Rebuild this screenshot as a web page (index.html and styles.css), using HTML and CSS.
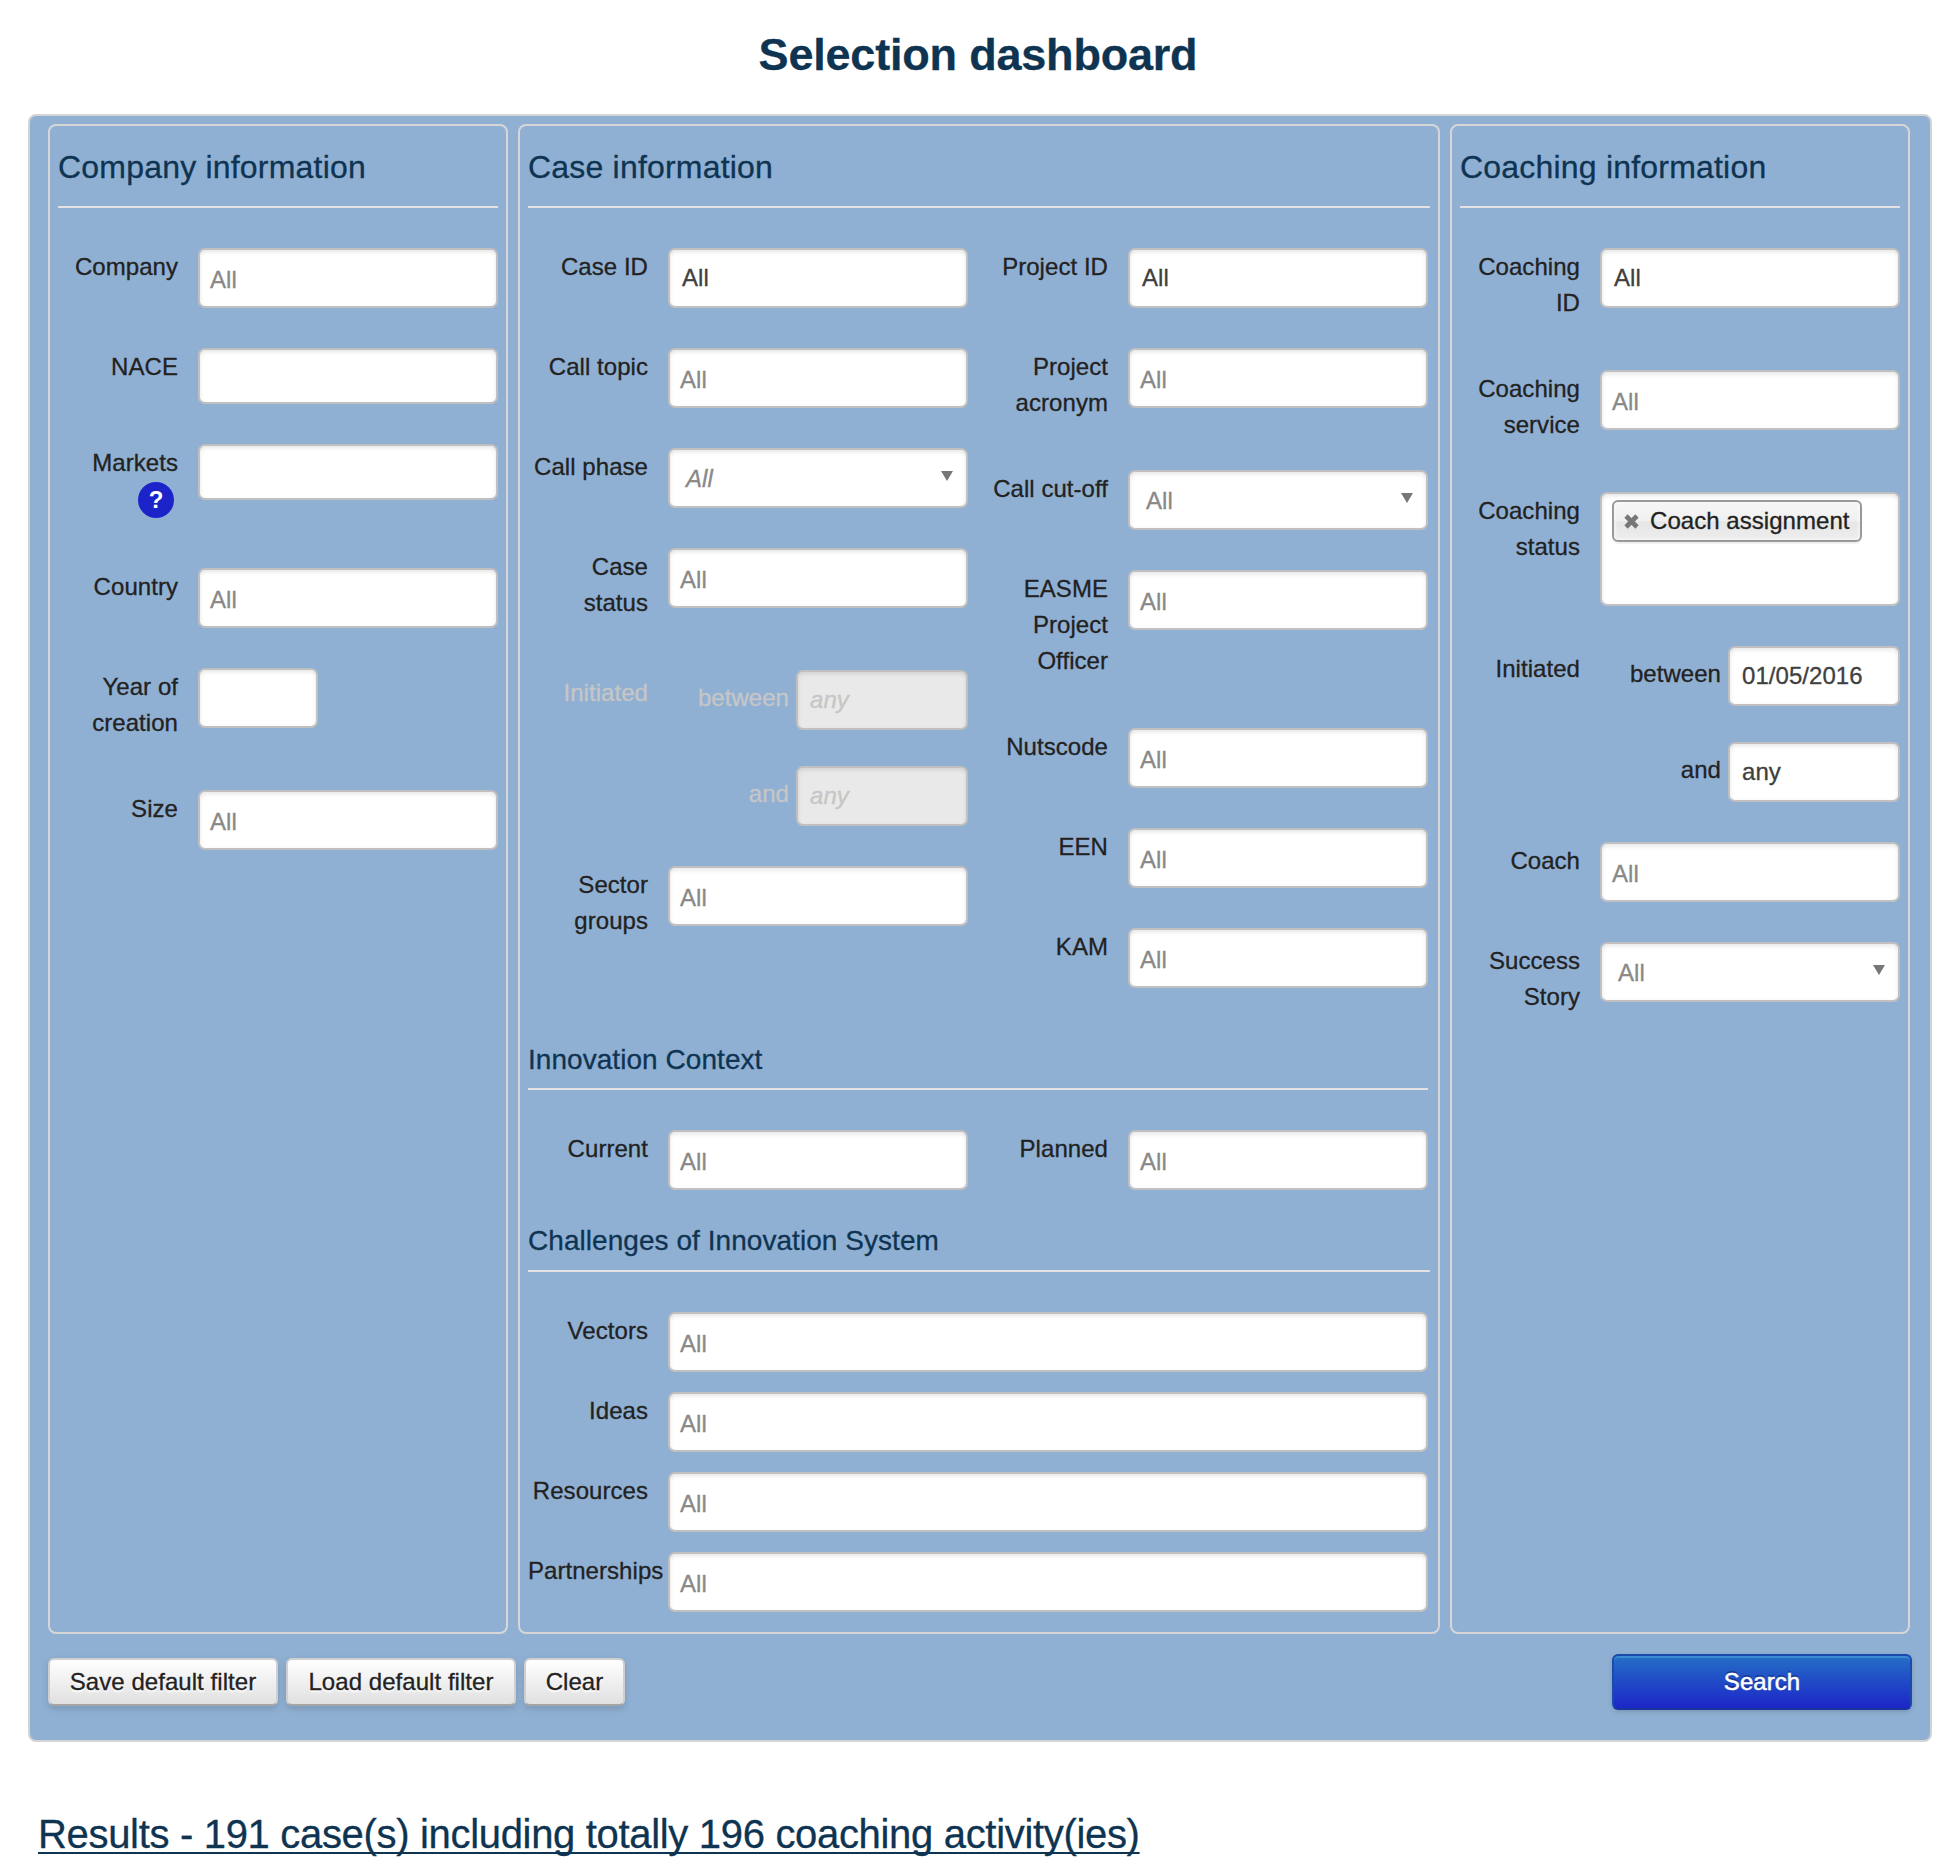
FILE: index.html
```html
<!DOCTYPE html>
<html lang="en">
<head>
<meta charset="utf-8">
<title>Selection dashboard</title>
<link rel="stylesheet" href="styles.css">
</head>
<body>
<h1 class="page-title">Selection dashboard</h1>
<main class="panel">
  <div class="columns">
    <section class="column">
      <h2 class="column-title">Company information</h2>
      <div class="rows">
        <div class="row"><div class="label">Company</div><div class="field multi">All</div></div>
        <div class="row"><div class="label">NACE</div><div class="field short"></div></div>
        <div class="row markets"><div class="label">Markets<span class="help">?</span></div><div class="field short"></div></div>
        <div class="row"><div class="label">Country</div><div class="field multi">All</div></div>
        <div class="row"><div class="label">Year of creation</div><div class="field year"></div></div>
        <div class="row"><div class="label">Size</div><div class="field multi">All</div></div>
      </div>
    </section>
    <section class="column">
      <h2 class="column-title">Case information</h2>
      <div class="pair case-pair">
        <div class="rows">
          <div class="row"><div class="label">Case ID</div><div class="field text">All</div></div>
          <div class="row"><div class="label">Call topic</div><div class="field multi">All</div></div>
          <div class="row"><div class="label">Call phase</div><div class="field select italic">All<svg class="arrow" viewBox="0 0 12 10"><path d="M0 0h12L6 10z"/></svg></div></div>
          <div class="row"><div class="label">Case status</div><div class="field multi">All</div></div>
          <div class="row disabled"><div class="label lowered">Initiated</div>
            <div class="dates">
              <div class="date"><span>between</span><div class="field text italic">any</div></div>
              <div class="date"><span>and</span><div class="field text italic">any</div></div>
            </div>
          </div>
          <div class="row"><div class="label">Sector groups</div><div class="field multi">All</div></div>
        </div>
        <div class="rows">
          <div class="row"><div class="label">Project ID</div><div class="field text">All</div></div>
          <div class="row"><div class="label">Project acronym</div><div class="field multi">All</div></div>
          <div class="row"><div class="label">Call cut-off</div><div class="field select">All<svg class="arrow" viewBox="0 0 12 10"><path d="M0 0h12L6 10z"/></svg></div></div>
          <div class="row"><div class="label">EASME Project Officer</div><div class="field multi">All</div></div>
          <div class="row"><div class="label">Nutscode</div><div class="field multi">All</div></div>
          <div class="row"><div class="label">EEN</div><div class="field multi">All</div></div>
          <div class="row"><div class="label">KAM</div><div class="field multi">All</div></div>
        </div>
      </div>
      <h3 class="sub-title context">Innovation Context</h3>
      <div class="pair">
        <div class="rows"><div class="row"><div class="label">Current</div><div class="field multi">All</div></div></div>
        <div class="rows"><div class="row"><div class="label">Planned</div><div class="field multi">All</div></div></div>
      </div>
      <h3 class="sub-title challenges">Challenges of Innovation System</h3>
      <div class="rows wide">
        <div class="row"><div class="label">Vectors</div><div class="field multi">All</div></div>
        <div class="row"><div class="label">Ideas</div><div class="field multi">All</div></div>
        <div class="row"><div class="label">Resources</div><div class="field multi">All</div></div>
        <div class="row"><div class="label">Partnerships</div><div class="field multi">All</div></div>
      </div>
    </section>
    <section class="column">
      <h2 class="column-title">Coaching information</h2>
      <div class="rows">
        <div class="row"><div class="label">Coaching ID</div><div class="field text">All</div></div>
        <div class="row"><div class="label">Coaching service</div><div class="field multi">All</div></div>
        <div class="row"><div class="label">Coaching status</div><div class="field tags"><div class="tag"><svg class="cross" viewBox="0 0 15 15"><path d="M2 2l11 11M13 2L2 13"/></svg>Coach assignment</div></div></div>
        <div class="row"><div class="label lowered">Initiated</div>
          <div class="dates">
            <div class="date"><span>between</span><div class="field text">01/05/2016</div></div>
            <div class="date"><span>and</span><div class="field text">any</div></div>
          </div>
        </div>
        <div class="row"><div class="label">Coach</div><div class="field multi">All</div></div>
        <div class="row"><div class="label">Success Story</div><div class="field select">All<svg class="arrow" viewBox="0 0 12 10"><path d="M0 0h12L6 10z"/></svg></div></div>
      </div>
    </section>
  </div>
  <div class="actions">
    <button class="btn save">Save default filter</button>
    <button class="btn load">Load default filter</button>
    <button class="btn clear">Clear</button>
    <button class="btn search">Search</button>
  </div>
</main>
<h2 class="results">Results - 191 case(s) including totally 196 coaching activity(ies)</h2>
</body>
</html>
```
FILE: styles.css
```css
* { box-sizing: border-box; }

body {
  margin: 0;
  height: 1868px;
  overflow: hidden;
  background: #fff;
  color: #222;
  font: 24px/36px "Helvetica Neue", "Liberation Sans", Arial, sans-serif;
  letter-spacing: 0.05px;
  -webkit-text-stroke: 0.3px;
}

h1, h2, h3 { margin: 0; color: #0e3452; font-weight: normal; }

.page-title {
  height: 114px;
  padding: 30px 4px 0 0;
  font-size: 45px;
  line-height: 50px;
  font-weight: bold;
  letter-spacing: -0.2px;
  text-align: center;
}

.panel {
  height: 1628px;
  margin: 0 28px;
  padding: 8px 18px;
  background: #90b0d3;
  border: 2px solid #d4d4d4;
  border-radius: 8px;
}

.columns {
  display: grid;
  grid-template-columns: 460px 922px 460px;
  gap: 10px;
  height: 1510px;
}

.column {
  padding: 0 8px;
  border: 2px solid #d6d6d6;
  border-radius: 8px;
}

.column-title {
  height: 82px;
  padding-top: 21px;
  border-bottom: 2px solid #e2e2e2;
  font-size: 32px;
  line-height: 40px;
  letter-spacing: 0.2px;
}

.rows {
  display: flex;
  flex-direction: column;
  gap: 40px;
  padding-top: 40px;
}

.pair { display: flex; gap: 20px; }
.pair .rows { width: 440px; }
.case-pair { height: 820px; }
.wide { width: 900px; gap: 20px; }

.row {
  display: grid;
  grid-template-columns: 120px minmax(0, 1fr);
  column-gap: 20px;
  align-items: start;
}
.row.markets { min-height: 84px; }

.label {
  max-height: 118px;
  padding: 1px 0 9px;
  text-align: right;
}
.wide .label { padding-bottom: 0; }
.lowered { padding-top: 5px; }

.help {
  display: block;
  width: 36px;
  height: 36px;
  margin: 1px 4px 0 auto;
  border-radius: 50%;
  background: #1c24c9;
  color: #fff;
  font-weight: bold;
  line-height: 36px;
  text-align: center;
  -webkit-text-stroke: 0;
}

.field {
  position: relative;
  height: 60px;
  border: 2px solid #c0c0c0;
  border-radius: 7px;
  background: #fff;
  box-shadow: inset 0 2px 4px rgba(0, 0, 0, 0.1);
  line-height: 24px;
}
.short { height: 56px; }
.year { width: 120px; }
.multi { padding: 18px 0 0 10px; color: #888; }
.text { padding: 16px 0 0 12px; color: #404040; }
.select { padding: 17px 0 0 16px; color: #888; }
.italic { font-style: italic; }
.tags { height: 114px; padding: 6px 0 0 10px; }

.arrow {
  position: absolute;
  top: 21px;
  right: 13px;
  width: 12px;
  height: 10px;
  fill: #777;
}

.tag {
  display: flex;
  align-items: center;
  width: 250px;
  height: 42px;
  padding-left: 10px;
  border: 2px solid #999;
  border-radius: 6px;
  background: linear-gradient(#f4f4f4 20%, #f0f0f0 50%, #e6e6e6 52%, #ededed);
  box-shadow: inset 0 0 4px #fff, 0 2px 1px rgba(0, 0, 0, 0.06);
  color: #222;
  white-space: nowrap;
}
.cross {
  flex: none;
  width: 15px;
  height: 15px;
  margin-right: 11px;
  fill: none;
  stroke: #777;
  stroke-width: 4.6;
}

.dates { display: flex; flex-direction: column; gap: 36px; }
.date {
  display: flex;
  justify-content: flex-end;
  gap: 7px;
}
.date span { padding-top: 10px; }
.date .field { width: 172px; }

.disabled, .disabled .field { color: #c6c6c6; }
.disabled .field { background: #e9e9e9; }

.sub-title {
  border-bottom: 2px solid #e2e2e2;
  font-size: 28px;
  line-height: 36px;
  letter-spacing: 0.05px;
}
.context { height: 62px; padding-top: 14px; width: 900px; }
.challenges { height: 82px; padding-top: 33px; }

.actions {
  display: flex;
  align-items: flex-start;
  padding-top: 20px;
}

.btn {
  height: 48px;
  margin: 4px 8px 0 0;
  padding: 0;
  border: 2px solid #cfcfcf;
  border-bottom-color: #a5a5a5;
  border-radius: 6px;
  background: linear-gradient(#fff, #e0e0e0);
  box-shadow: 0 3px 6px rgba(60, 80, 90, 0.25);
  color: #222;
  font: inherit;
  letter-spacing: inherit;
  line-height: 42px;
  text-shadow: 0 2px 2px #fff;
}
.save, .load { width: 230px; }
.clear { width: 101px; }
.search {
  width: 300px;
  height: 56px;
  margin: 0 0 0 auto;
  border: 2px solid #1b49ac;
  border-bottom-color: #16349c;
  background: linear-gradient(#246fc6, #1d25c8);
  box-shadow: inset 0 2px 0 rgba(80, 170, 225, 0.5), 0 2px 4px rgba(60, 80, 90, 0.25);
  color: #fff;
  text-shadow: 0 -2px 0 rgba(0, 0, 0, 0.3);
  -webkit-text-stroke: 0.5px;
}

.results {
  margin: 67px 0 0 38px;
  font-size: 40px;
  line-height: 50px;
  letter-spacing: -0.32px;
  text-decoration: underline;
  text-decoration-thickness: 2px;
  text-underline-offset: 4px;
  text-decoration-skip-ink: none;
  white-space: nowrap;
}
```
